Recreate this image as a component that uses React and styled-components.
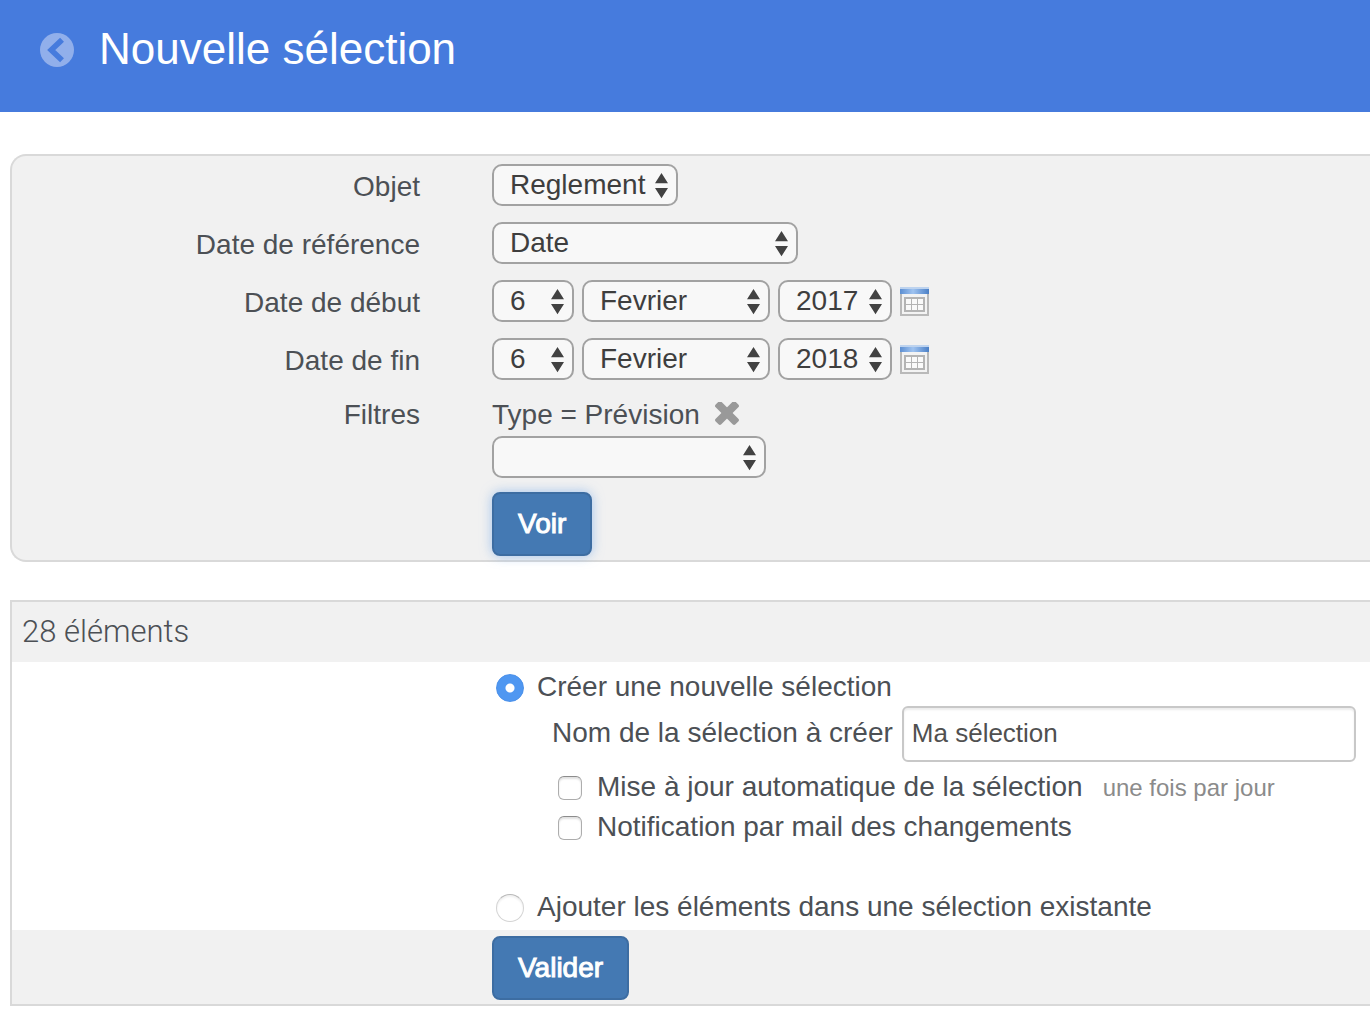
import React, { useState } from 'react'
import styled, { createGlobalStyle, css } from 'styled-components'

const GlobalStyle = createGlobalStyle`
  *, *::before, *::after {
    box-sizing: border-box;
  }

  body {
    margin: 0;
    background-color: white;
    color: #4c5055;
    font-family: 'Liberation Sans', Arial, sans-serif;
    font-size: 28px;
  }
`

const caret =
  "url(\"data:image/svg+xml,%3Csvg xmlns='http://www.w3.org/2000/svg' width='13' height='26'%3E%3Cpath fill='%23424242' d='M0 10.2 6.5 0 13 10.2zM0 15 13 15 6.5 25.3z'/%3E%3C/svg%3E\")"

const Header = styled.header`
  display: flex;
  align-items: center;
  gap: 25px;
  height: 112px;
  padding: 0 40px 12px;
  background-color: #467bdd;
  color: white;

  h1 {
    margin: 0;
    padding-bottom: 2px;
    font-size: 44px;
    font-weight: 400;
    line-height: 52px;
  }
`

const BackLink = styled.a`
  display: flex;

  svg {
    width: 34px;
    height: 34px;
  }
`

const Main = styled.main`
  padding: 42px 0 14px 10px;
`

const FilterForm = styled.form`
  margin-bottom: 38px;
  padding: 8px 0 4px;
  background-color: #f1f1f1;
  border: 2px solid #d9d9d9;
  border-right: none;
  border-radius: 16px 0 0 16px;
`

const Row = styled.div`
  display: grid;
  grid-template-columns: 408px 1fr;
  column-gap: 72px;
  margin-bottom: ${({ $last }) => ($last ? 0 : 16)}px;
`

const RowLabel = styled.label`
  text-align: right;
  line-height: ${({ $compact }) => ($compact ? 38 : 46)}px;
  height: ${({ $compact }) => ($compact ? 36 : 42)}px;
`

const Controls = styled.div`
  display: flex;
  align-items: center;
  gap: 8px;
`

const Select = styled.select`
  appearance: none;
  width: ${({ $width }) => $width}px;
  height: 42px;
  margin: 0;
  padding: 0 24px 2px 16px;
  border: 2px solid #a2a2a2;
  border-radius: 10px;
  background: #f8f8f8 ${caret} no-repeat right 8px top 7px;
  color: #3e3e3e;
  font: inherit;
`

const IconButton = styled.button`
  display: flex;
  padding: 0;
  border: none;
  background: none;
  cursor: pointer;
`

const Filters = styled.div`
  display: flex;
  flex-direction: column;
  align-items: flex-start;
`

const ActiveFilter = styled.div`
  display: flex;
  align-items: center;
  gap: 14px;
  height: 38px;
  margin-bottom: 2px;
  line-height: 38px;
`

const Button = styled.button`
  height: 64px;
  padding: 0 24px;
  border: 2px solid #3d6da2;
  border-radius: 8px;
  background-color: #4479b3;
  color: white;
  font: inherit;
  -webkit-text-stroke: 1px white;
  cursor: pointer;

  ${({ $active }) =>
    $active &&
    css`
      margin-top: 14px;
      box-shadow: 0 0 12px rgba(110, 165, 235, 0.6);
    `}
`

const ResultForm = styled.form`
  border: 2px solid #d9d9d9;
  border-right: none;
`

const ResultTitle = styled.h2`
  margin: 0;
  padding: 0 10px;
  background-color: #f1f1f1;
  font-family: Roboto, sans-serif;
  font-size: 31px;
  font-weight: 300;
  line-height: 60px;
`

const ResultBody = styled.div`
  padding: 4px 14px 4px 480px;
`

const ResultFooter = styled.div`
  padding: 6px 0 4px 480px;
  background-color: #f1f1f1;
`

const Choice = styled.label`
  display: flex;
  align-items: flex-start;
  gap: ${({ $nested }) => ($nested ? 15 : 13)}px;
  height: 40px;
  padding-left: ${({ $nested }) => ($nested ? 6 : 4)}px;
  line-height: 42px;
`

const Radio = styled.input`
  appearance: none;
  width: 28px;
  height: 28px;
  margin: 8px 0 0;
  border: 1px solid #d4d4d4;
  border-top-color: #b8b8b8;
  border-radius: 50%;
  background-color: white;
  box-shadow: inset 0 2px 2px rgba(0, 0, 0, 0.06);

  &:checked {
    border-color: #4a90ea;
    background: radial-gradient(circle, white 4px, #4f97f1 5px);
    box-shadow: none;
  }
`

const Checkbox = styled.input`
  appearance: none;
  width: 24px;
  height: 24px;
  margin: 10px 0 0;
  border: 1px solid #adadad;
  border-top-color: #8c8c8c;
  border-radius: 6px;
  background-color: white;
  box-shadow: inset 0 2px 2px rgba(0, 0, 0, 0.12);

  &:checked {
    background-color: #4f97f1;
  }
`

const Nested = styled.div`
  margin: 0 0 40px 60px;
`

const NameField = styled.div`
  display: flex;
  gap: 9px;
  margin-bottom: 4px;
  line-height: 54px;
`

const TextInput = styled.input`
  flex: 1;
  min-width: 0;
  height: 56px;
  padding: 0 8px 2px;
  border: 2px solid #c8c8c8;
  border-radius: 6px;
  background-color: white;
  box-shadow: inset 0 2px 2px rgba(0, 0, 0, 0.08);
  color: #505050;
  font: inherit;
  font-size: 26px;
`

const Hint = styled.small`
  margin-left: 20px;
  color: #8b8b8b;
  font-size: 24px;
`

const BackIcon = () => (
  <svg viewBox="0 0 34 34" fill="none" aria-hidden="true">
    <circle cx="17" cy="17" r="17" fill="#91afeb" />
    <path
      d="M20 8.6 11.2 17l8.8 8.4"
      stroke="#467bdd"
      strokeWidth="5.6"
      strokeLinecap="square"
    />
  </svg>
)

const CrossIcon = () => (
  <svg width="26" height="26" viewBox="0 0 26 26" fill="#999" aria-hidden="true">
    <rect x="-1" y="7" width="28" height="8" rx="2" transform="rotate(45 13 11)" />
    <rect x="-1" y="7" width="28" height="8" rx="2" transform="rotate(-45 13 11)" />
  </svg>
)

const CalendarIcon = () => (
  <svg width="29" height="30" viewBox="0 0 29 30" aria-hidden="true">
    <defs>
      <linearGradient id="calendar-bar" x1="0" x2="1" y1="0" y2="0">
        <stop offset="0" stopColor="#5d8fd2" />
        <stop offset="0.45" stopColor="#9fc3f0" />
        <stop offset="1" stopColor="#4a7fc6" />
      </linearGradient>
    </defs>
    <rect x="1" y="6" width="27" height="23" fill="#f3f3f3" stroke="#b9b9b9" strokeWidth="2" />
    <rect x="0" y="1" width="29" height="7" fill="url(#calendar-bar)" />
    <rect x="0" y="1" width="29" height="2" fill="#bdd3ef" />
    <rect x="4" y="11" width="21" height="15" fill="#b4b4b4" />
    <g fill="#fafafa">
      {[6, 12, 18].map(x =>
        [13, 19].map(y => <rect key={`${x}-${y}`} x={x} y={y} width="5" height="5" />)
      )}
    </g>
  </svg>
)

const months = [
  'Janvier',
  'Fevrier',
  'Mars',
  'Avril',
  'Mai',
  'Juin',
  'Juillet',
  'Aout',
  'Septembre',
  'Octobre',
  'Novembre',
  'Decembre',
]
const days = Array.from({ length: 31 }, (_, i) => i + 1)
const years = [2015, 2016, 2017, 2018, 2019]

function DateRow({ id, label, year }) {
  return (
    <Row>
      <RowLabel htmlFor={id}>{label}</RowLabel>
      <Controls>
        <Select id={id} $width={82} defaultValue={6}>
          {days.map(d => (
            <option key={d}>{d}</option>
          ))}
        </Select>
        <Select $width={188} defaultValue="Fevrier" aria-label={`${label}, mois`}>
          {months.map(m => (
            <option key={m}>{m}</option>
          ))}
        </Select>
        <Select $width={114} defaultValue={year} aria-label={`${label}, année`}>
          {years.map(y => (
            <option key={y}>{y}</option>
          ))}
        </Select>
        <IconButton type="button" aria-label="Calendrier">
          <CalendarIcon />
        </IconButton>
      </Controls>
    </Row>
  )
}

function App() {
  const [mode, setMode] = useState('create')

  return (
    <>
      <GlobalStyle />
      <Header>
        <BackLink href="#" aria-label="Retour">
          <BackIcon />
        </BackLink>
        <h1>Nouvelle sélection</h1>
      </Header>
      <Main>
        <FilterForm onSubmit={e => e.preventDefault()}>
          <Row>
            <RowLabel htmlFor="objet">Objet</RowLabel>
            <Controls>
              <Select id="objet" $width={186}>
                <option>Reglement</option>
              </Select>
            </Controls>
          </Row>
          <Row>
            <RowLabel htmlFor="reference">Date de référence</RowLabel>
            <Controls>
              <Select id="reference" $width={306}>
                <option>Date</option>
              </Select>
            </Controls>
          </Row>
          <DateRow id="debut" label="Date de début" year={2017} />
          <DateRow id="fin" label="Date de fin" year={2018} />
          <Row $last>
            <RowLabel htmlFor="filtres" $compact>
              Filtres
            </RowLabel>
            <Filters>
              <ActiveFilter>
                <span>Type = Prévision</span>
                <IconButton type="button" aria-label="Supprimer le filtre">
                  <CrossIcon />
                </IconButton>
              </ActiveFilter>
              <Select id="filtres" $width={274}>
                <option />
              </Select>
              <Button $active>Voir</Button>
            </Filters>
          </Row>
        </FilterForm>

        <ResultForm onSubmit={e => e.preventDefault()}>
          <ResultTitle>28 éléments</ResultTitle>
          <ResultBody>
            <Choice>
              <Radio
                type="radio"
                name="mode"
                checked={mode === 'create'}
                onChange={() => setMode('create')}
              />
              Créer une nouvelle sélection
            </Choice>
            <Nested>
              <NameField>
                <label htmlFor="nom">Nom de la sélection à créer</label>
                <TextInput id="nom" type="text" defaultValue="Ma sélection" />
              </NameField>
              <Choice $nested>
                <Checkbox type="checkbox" />
                <span>
                  Mise à jour automatique de la sélection
                  <Hint>une fois par jour</Hint>
                </span>
              </Choice>
              <Choice $nested>
                <Checkbox type="checkbox" />
                <span>Notification par mail des changements</span>
              </Choice>
            </Nested>
            <Choice>
              <Radio
                type="radio"
                name="mode"
                checked={mode === 'add'}
                onChange={() => setMode('add')}
              />
              Ajouter les éléments dans une sélection existante
            </Choice>
          </ResultBody>
          <ResultFooter>
            <Button>Valider</Button>
          </ResultFooter>
        </ResultForm>
      </Main>
    </>
  )
}

export default App
